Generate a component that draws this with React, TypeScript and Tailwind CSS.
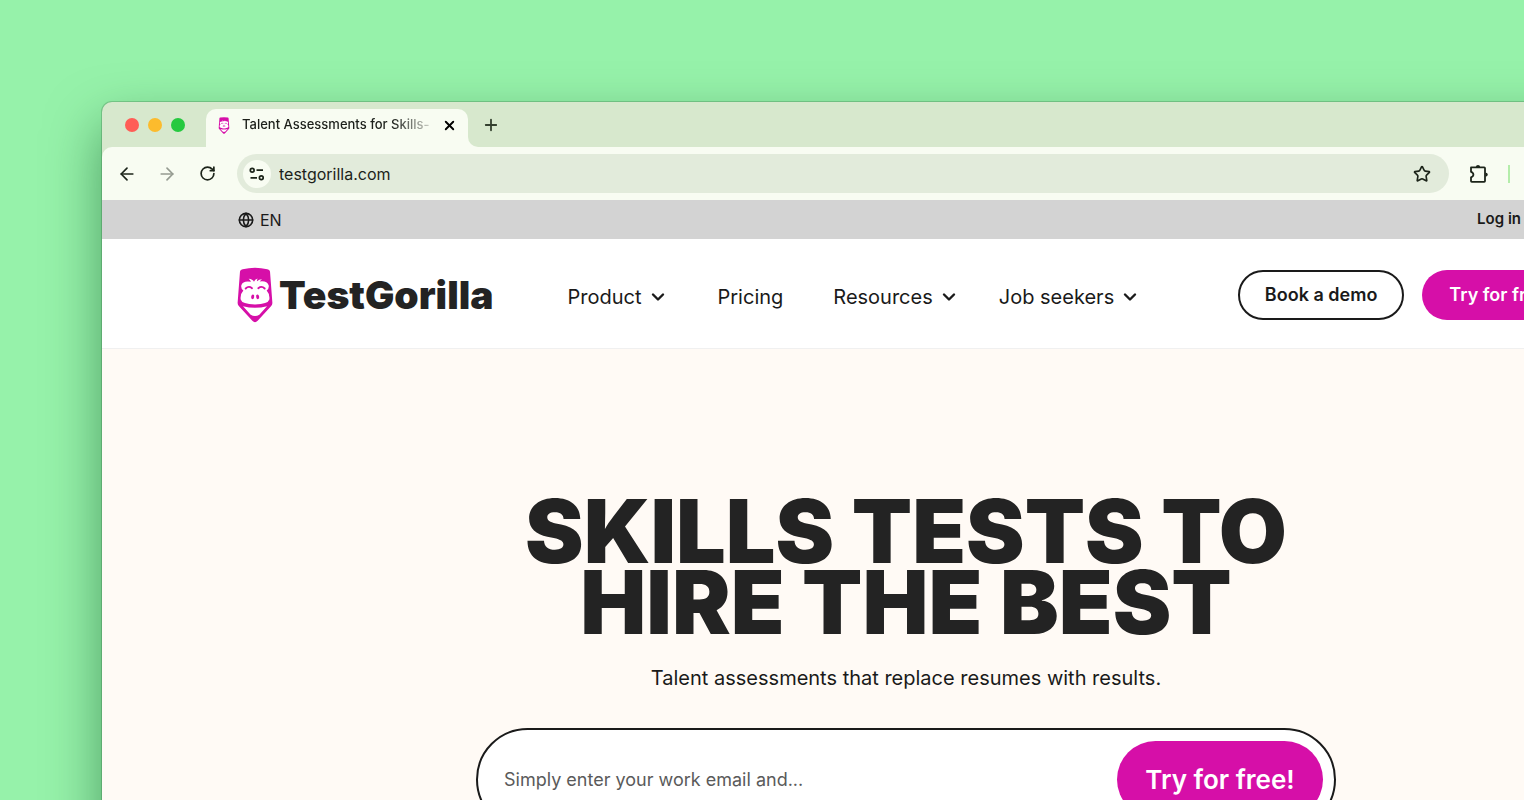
import { ArrowLeft, ArrowRight, ChevronDown, Globe, Plus, RotateCw, Star, X } from "lucide-react";

function GorillaMark({ className }: { className?: string }) {
  return (
    <svg viewBox="20 17 108 167" className={className} aria-hidden="true">
      <path
        fill="#d60fa8"
        d="M29 30Q30 24 37 23Q74 14 111 23Q118 24 119 30L126 122Q127 129 122 134L82 178Q74 186 66 178L26 134Q21 129 22 122Z"
      />
      <path
        fill="#fff"
        d="M55 52Q67 53 71 61Q73 54 82 51Q79 56 80 59Q86 53 95 53Q90 57 88 60Q110 57 115 71Q117 82 109 87Q119 98 117 114Q113 128 74 129Q35 128 31 114Q29 98 39 87Q31 82 33 71Q38 57 62 61Q60 56 55 52Z"
      />
      <path fill="none" stroke="#d60fa8" strokeWidth="5.5" strokeLinecap="round" d="M46 81Q55 72 65 80M84 80Q94 72 103 81" />
      <ellipse cx="67" cy="106" rx="4.5" ry="7" fill="#d60fa8" transform="rotate(12 67 106)" />
      <ellipse cx="82" cy="106" rx="4.5" ry="7" fill="#d60fa8" transform="rotate(-12 82 106)" />
      <path fill="#fff" d="M38 134Q74 144 110 134L87 160Q74 167 61 160Z" />
    </svg>
  );
}

function TuneIcon() {
  return (
    <svg viewBox="0 0 16 16" className="size-4" fill="none" stroke="#1c241a" strokeWidth="1.7" aria-hidden="true">
      <circle cx="3.2" cy="4.2" r="1.9" />
      <path d="M7.5 4.2H14M1.5 11.8H8" />
      <circle cx="12.3" cy="11.8" r="1.9" />
    </svg>
  );
}

function PuzzleIcon() {
  return (
    <svg viewBox="0 0 20 20" className="size-5" aria-hidden="true">
      <path
        fill="none"
        stroke="#1c241a"
        strokeWidth="1.8"
        strokeLinejoin="round"
        d="M2 3.4H15.2Q16 3.4 16 4.2V17Q16 17.8 15.2 17.8H2.8Q2 17.8 2 17V13.4Q4.4 12.6 4.4 10.6Q4.4 8.6 2 7.8Z"
      />
      <path fill="#1c241a" d="M6.8 3Q7 1 9 1Q11 1 11.2 3ZM16.5 8.4Q18.8 8.6 18.8 10.6Q18.8 12.6 16.5 12.8Z" />
    </svg>
  );
}

const navItems = [
  { label: "Product", menu: true, gap: "mr-[50px]" },
  { label: "Pricing", menu: false, gap: "mr-[50px]" },
  { label: "Resources", menu: true, gap: "mr-10" },
  { label: "Job seekers", menu: true, gap: "" },
];

function TabStrip() {
  return (
    <div className="flex h-[45px]">
      <div className="flex w-[104px] items-center gap-[9px] pl-[23px]">
        <span className="size-[14px] rounded-full bg-[#ff5d56]" />
        <span className="size-[14px] rounded-full bg-[#fcbb2d]" />
        <span className="size-[14px] rounded-full bg-[#26c940]" />
      </div>
      <div className="flex pt-[7px]">
        <div className="flex w-[262px] items-center rounded-t-[10px] bg-[#f8fcf2] pr-[11px] pb-[6px] pl-3">
          <GorillaMark className="h-[17px] w-3" />
          <span className="ml-3 w-[188px] bg-gradient-to-r from-[#1c1f1a] from-80% to-[#1c1f1a]/20 bg-clip-text text-[13px] font-medium whitespace-nowrap text-transparent">
            Talent Assessments for Skills-
          </span>
          <button aria-label="Close tab" className="ml-auto">
            <X className="size-[15px]" strokeWidth={3} />
          </button>
        </div>
      </div>
      <div className="flex flex-1 bg-[#f8fcf2]">
        <div className="flex flex-1 items-center rounded-bl-[10px] bg-[#d7e8cd] pl-[14px]">
          <button aria-label="New tab">
            <Plus className="size-[18px] text-[#33402e]" strokeWidth={2.4} />
          </button>
        </div>
      </div>
    </div>
  );
}

function Toolbar() {
  return (
    <div className="flex h-[53px] items-center rounded-tl-[10px] bg-[#f8fcf2] pl-[15px] text-[#1c241a]">
      <button aria-label="Back">
        <ArrowLeft className="size-5" />
      </button>
      <button aria-label="Forward" className="ml-5 text-[#959b91]">
        <ArrowRight className="size-5" />
      </button>
      <button aria-label="Reload" className="ml-[22px]">
        <RotateCw className="size-[17px]" strokeWidth={2.4} />
      </button>
      <div className="ml-[21px] flex h-[39px] flex-1 items-center rounded-full bg-[#e2ebdb] pr-[18px] pl-[6px]">
        <button aria-label="Site information" className="flex size-7 items-center justify-center rounded-full bg-[#f8fcf2]">
          <TuneIcon />
        </button>
        <input
          aria-label="Address"
          defaultValue="testgorilla.com"
          className="ml-2 min-w-0 flex-1 bg-transparent text-base text-[#1c1f1a] outline-none"
        />
        <button aria-label="Bookmark this page">
          <Star className="size-[18px]" strokeWidth={2.2} strokeLinejoin="miter" />
        </button>
      </div>
      <div className="flex w-[261px] items-center pl-5">
        <button aria-label="Extensions">
          <PuzzleIcon />
        </button>
        <span className="ml-[19px] h-[18px] w-[2px] bg-[#b4edaa]" />
      </div>
    </div>
  );
}

function SiteHeader() {
  return (
    <header>
      <div className="flex h-[39px] items-center justify-between bg-[#d3d3d3] pr-[189px] pl-[136px] text-base text-[#1a1a1a]">
        <button className="flex items-center gap-[6px]">
          <Globe className="size-4" strokeWidth={2.4} />
          EN
        </button>
        <a href="#login" className="text-[15px] font-semibold">
          Log in
        </a>
      </div>
      <div className="flex h-[110px] items-center border-b border-[#f0f0f0] bg-white pt-[2px] pr-[136px] pl-[135px]">
        <a href="#home" className="flex items-center gap-[6px]">
          <GorillaMark className="h-[56px] w-9" />
          <span className="text-[39px] leading-none font-black text-[#232323]">TestGorilla</span>
        </a>
        <nav className="ml-[74px] flex items-center pt-1 text-xl text-[#1a1a1a]">
          {navItems.map((item) => (
            <a key={item.label} href="#menu" className={`flex items-center gap-[6px] whitespace-nowrap ${item.gap}`}>
              {item.label}
              {item.menu && <ChevronDown className="size-5" strokeWidth={2.9} />}
            </a>
          ))}
        </nav>
        <div className="ml-auto flex gap-[18px] text-lg font-semibold whitespace-nowrap">
          <button className="h-[50px] rounded-full border-2 border-[#1a1a1a] px-[25px] text-[#1a1a1a]">Book a demo</button>
          <button className="h-[50px] rounded-full bg-[#d60fa8] px-[27px] text-white">Try for free</button>
        </div>
      </div>
    </header>
  );
}

function Hero() {
  return (
    <main className="flex flex-1 flex-col items-center bg-[#fffaf5] pt-[147px]">
      <h1 className="text-center text-[88px] leading-[71px] font-black text-[#232323]">
        SKILLS TESTS TO
        <br />
        HIRE THE BEST
      </h1>
      <p className="mt-[26px] text-xl leading-7 text-[#1a1a1a]">Talent assessments that replace resumes with results.</p>
      <form className="mt-9 flex h-[103px] w-full max-w-[860px] shrink-0 items-center rounded-full border-2 border-[#1a1a1a] bg-white pr-[11px] pl-[26px]">
        <input
          type="email"
          aria-label="Work email"
          placeholder="Simply enter your work email and..."
          className="min-w-0 flex-1 bg-transparent text-lg outline-none placeholder:text-[#5a5a5a]"
        />
        <button type="button" className="h-[77px] w-[206px] rounded-full bg-[#d60fa8] text-[26px] font-semibold text-white">
          Try for free!
        </button>
      </form>
    </main>
  );
}

export default function App() {
  return (
    <div className="flex h-screen overflow-hidden bg-[#96f2aa] pt-[102px] pl-[102px] font-['Inter',sans-serif]">
      <div className="-mr-[186px] -mb-[100px] flex flex-1 flex-col overflow-hidden rounded-tl-[10px] bg-[#d7e8cd] shadow-[0_0_0_1px_rgba(40,90,50,0.25),0_24px_54px_rgba(0,70,25,0.5)]">
        <TabStrip />
        <Toolbar />
        <SiteHeader />
        <Hero />
      </div>
    </div>
  );
}
